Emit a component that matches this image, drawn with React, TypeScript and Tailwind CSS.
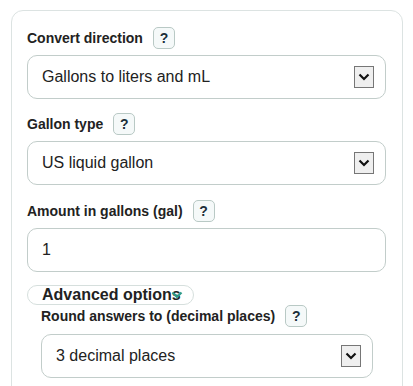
import { ReactNode } from "react";

function HelpButton() {
  return (
    <button
      type="button"
      className="ml-[10px] flex h-[22px] w-[22px] items-center justify-center rounded-[5px] border border-[#b9c9c5] bg-[#f5f9f9] text-[14px] font-bold text-[#1c2f3a]"
    >
      ?
    </button>
  );
}

function FieldLabel({ children }: { children: ReactNode }) {
  return (
    <div className="flex h-[22px] items-center">
      <span className="text-[14px] font-bold text-[#222]">{children}</span>
      <HelpButton />
    </div>
  );
}

function ArrowBox() {
  return (
    <span className="flex h-[22px] w-[20px] items-center justify-center border border-[#767676] bg-[#efefef]">
      <svg width="12" height="8" viewBox="0 0 12 8" aria-hidden="true">
        <path d="M1.5 1.5 L6 6 L10.5 1.5" fill="none" stroke="#111" strokeWidth="2.2" />
      </svg>
    </span>
  );
}

function SelectBox({ value }: { value: string }) {
  return (
    <div className="flex h-[44px] items-center justify-between rounded-[10px] border border-[#c2cdca] bg-white pl-[14px] pr-[11px]">
      <span className="text-[16px] text-[#222]">{value}</span>
      <ArrowBox />
    </div>
  );
}

export default function App() {
  return (
    <div
      className="h-[386px] overflow-hidden bg-white pl-[11px] pt-[10px]"
      style={{ fontFamily: '"Liberation Sans", Arial, sans-serif' }}
    >
      <div className="h-[400px] w-[392px] rounded-[12px] border border-[#dce3e2] pl-[15px] pr-[16px] pt-[16px]">
        <FieldLabel>Convert direction</FieldLabel>
        <div className="mt-[6px]">
          <SelectBox value="Gallons to liters and mL" />
        </div>

        <div className="mt-[14px]">
          <FieldLabel>Gallon type</FieldLabel>
        </div>
        <div className="mt-[6px]">
          <SelectBox value="US liquid gallon" />
        </div>

        <div className="mt-[15px]">
          <FieldLabel>Amount in gallons (gal)</FieldLabel>
        </div>
        <div className="mt-[6px] flex h-[44px] items-center rounded-[10px] border border-[#c2cdca] bg-white pl-[14px]">
          <span className="text-[16px] text-[#222]">1</span>
        </div>

        <div className="relative mt-[13px] flex h-[20px] w-[167px] items-center rounded-full border border-[#d6dfdd] pl-[14px]">
          <span className="text-[16px] font-bold leading-none text-[#222]">Advanced options</span>
          <svg
            className="absolute left-[143px] top-[5px]"
            width="12"
            height="8"
            viewBox="0 0 12 8"
            aria-hidden="true"
          >
            <path d="M1.5 1.5 L6 6 L10.5 1.5" fill="none" stroke="#2e9b8a" strokeWidth="2.2" />
          </svg>
        </div>

        <div className="ml-[14px] pr-[13px]">
          <FieldLabel>Round answers to (decimal places)</FieldLabel>
          <div className="mt-[7px]">
            <SelectBox value="3 decimal places" />
          </div>
        </div>
      </div>
    </div>
  );
}
